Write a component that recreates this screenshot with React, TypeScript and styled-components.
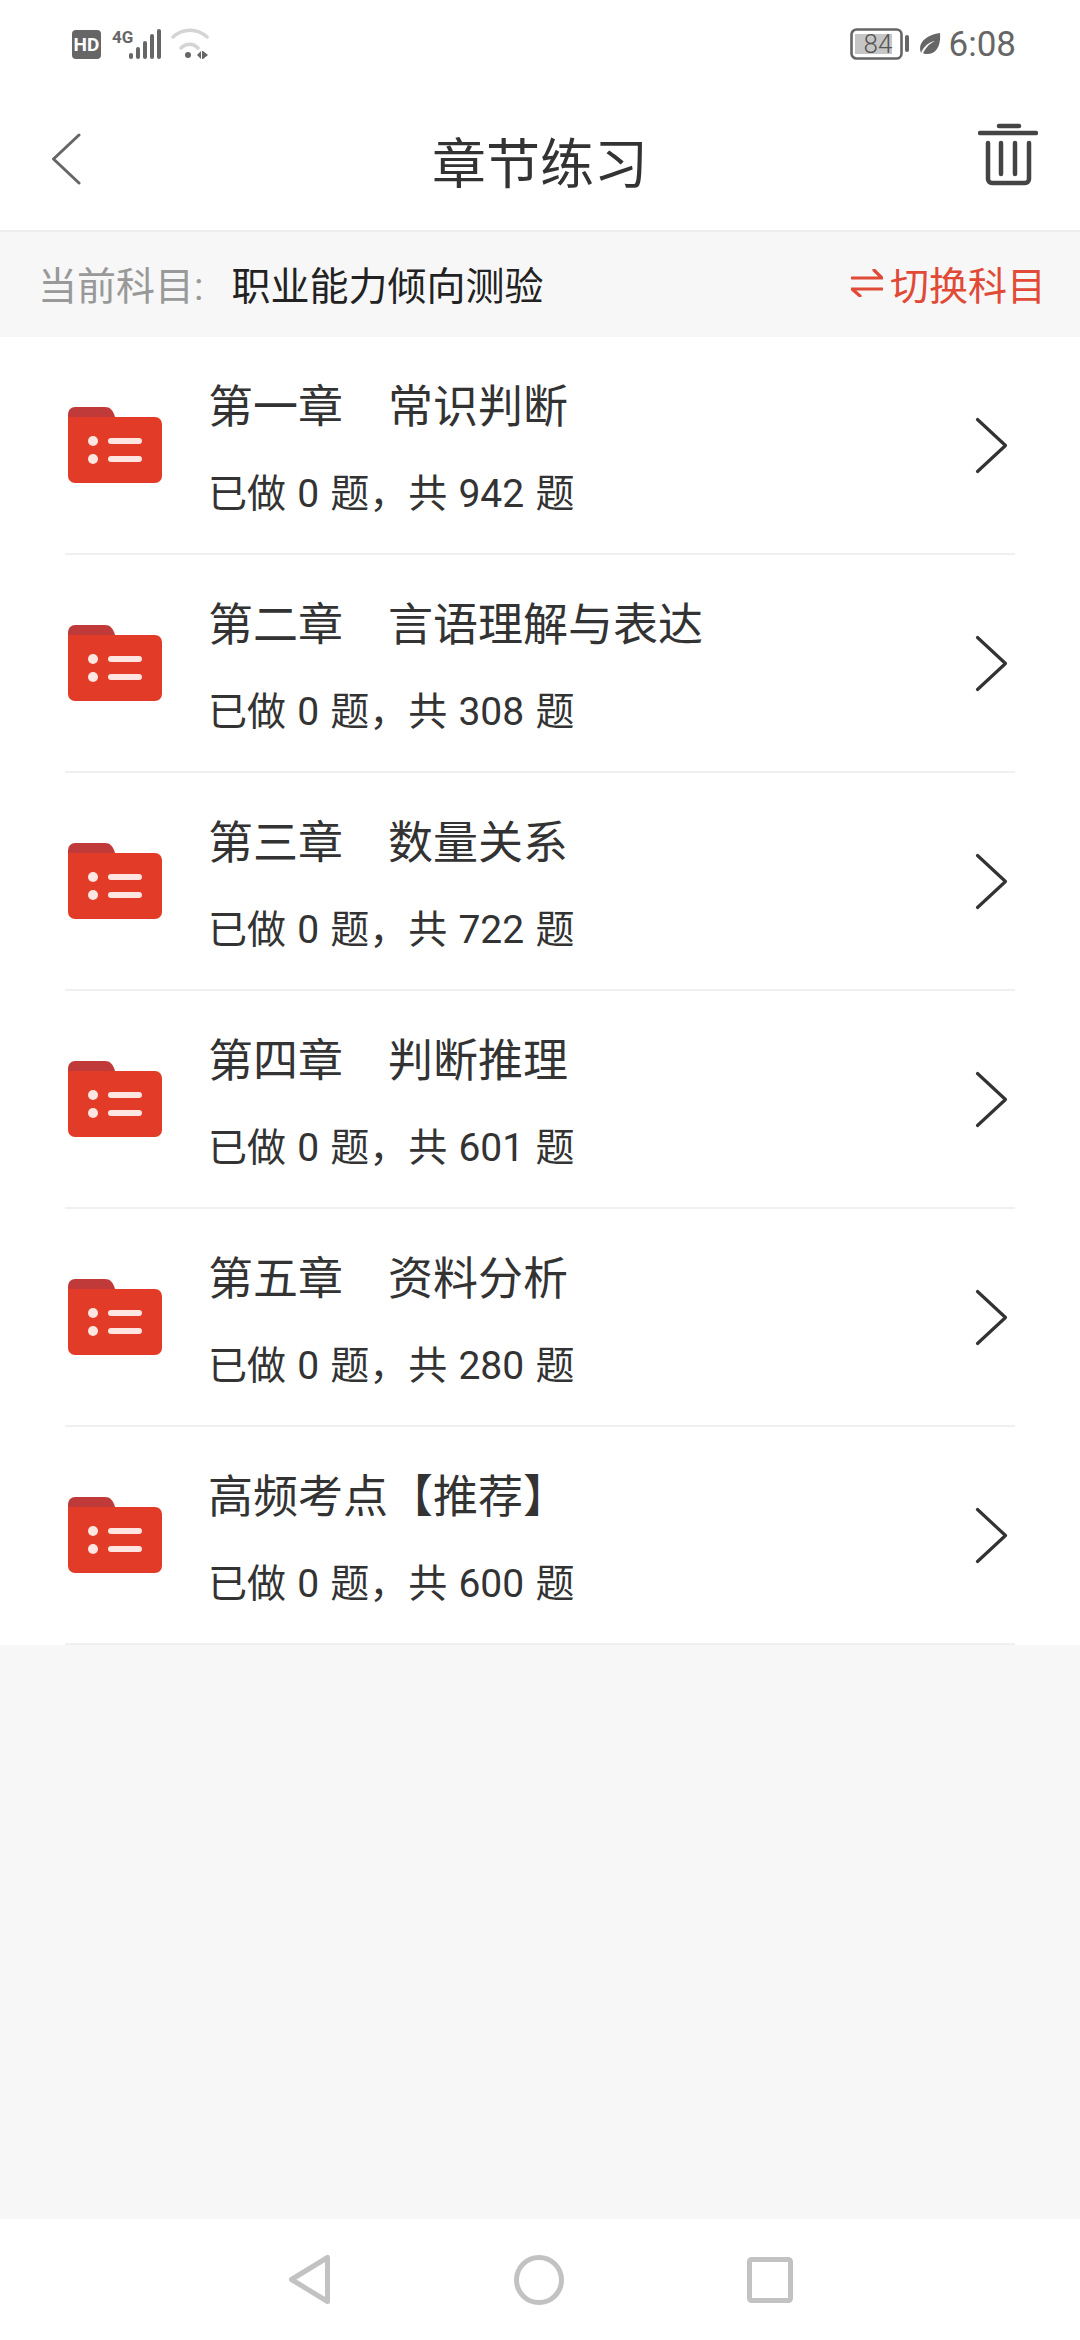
import React from 'react';
import styled, { createGlobalStyle } from 'styled-components';

const GlobalStyle = createGlobalStyle`
    html, body {
        margin: 0;
        padding: 0;
        background: #f7f7f7;
    }

    * {
        box-sizing: border-box;
    }
`;

const Page = styled.div`
    width: 1080px;
    height: 2340px;
    display: flex;
    flex-direction: column;
    background: #f7f7f7;
    font-family: Roboto, "Noto Sans CJK SC", sans-serif;
    overflow: hidden;
`;

const StatusBar = styled.div`
    height: 88px;
    flex: none;
    display: flex;
    align-items: center;
    justify-content: space-between;
    padding: 0 64px 0 72px;
    background: #fff;
    color: #666;
`;

const StatusGroup = styled.div`
    display: flex;
    align-items: center;
`;

const Clock = styled.span`
    margin-left: 8px;
    font-size: 35px;
    color: #666;
`;

const Header = styled.header`
    height: 144px;
    flex: none;
    display: grid;
    grid-template-columns: 1fr auto 1fr;
    align-items: center;
    padding: 2px 42px 0;
    background: #fff;
    border-bottom: 2px solid #eeeeee;
`;

const BackButton = styled.div`
    display: flex;
    margin-left: 9px;
    margin-bottom: 2px;
`;

const TrashButton = styled.div`
    display: flex;
    justify-content: flex-end;
    margin-bottom: 11px;
`;

const Title = styled.h1`
    margin: 0;
    font-size: 54px;
    font-weight: 400;
    color: #333;
`;

const SubjectBar = styled.div`
    height: 105px;
    flex: none;
    display: flex;
    align-items: center;
    justify-content: space-between;
    padding: 0 34px 3px 38px;
`;

const SubjectLabel = styled.span`
    font-size: 39px;
    color: #999;
`;

const SubjectName = styled.span`
    margin-left: 28px;
    font-size: 39px;
    color: #222;
`;

const SwitchButton = styled.div`
    display: flex;
    align-items: center;
    gap: 7px;
    font-size: 39px;
    color: #e04a36;
`;

const List = styled.div`
    flex: none;
    background: #fff;
`;

const Row = styled.div`
    height: 218px;
    margin: 0 65px;
    display: flex;
    align-items: center;
    border-bottom: 2px solid #f0f0f0;
`;

const RowText = styled.div`
    flex: 1;
    margin-left: 46px;
    padding-top: 7px;
    display: flex;
    flex-direction: column;
    gap: 32px;
`;

const RowTitle = styled.div`
    font-size: 45px;
    line-height: 58px;
    color: #333;
    white-space: pre;
`;

const ChapterName = styled.span`
    margin-left: 45px;
`;

const RowMeta = styled.div`
    font-size: 39px;
    line-height: 50px;
    word-spacing: 1.5px;
    color: #333;
`;

const Spacer = styled.div`
    flex: 1;
`;

const NavBar = styled.nav`
    height: 121px;
    flex: none;
    display: flex;
    align-items: center;
    justify-content: center;
    gap: 183px;
    background: #fff;
`;

const chapters = [
    { chapter: '第一章', name: '常识判断', total: 942 },
    { chapter: '第二章', name: '言语理解与表达', total: 308 },
    { chapter: '第三章', name: '数量关系', total: 722 },
    { chapter: '第四章', name: '判断推理', total: 601 },
    { chapter: '第五章', name: '资料分析', total: 280 },
    { chapter: '高频考点【推荐】', total: 600 },
];

const FolderIcon = () => (
    <svg width="94" height="76" viewBox="0 0 94 76" style={{ flex: 'none', marginLeft: 3 }}>
        <path d="M0 7a7 7 0 0 1 7-7h30c5 0 8 3 10 10v4H0z" fill="#c13a3a" />
        <path d="M0 10h87a7 7 0 0 1 7 7v52a7 7 0 0 1-7 7H7a7 7 0 0 1-7-7z" fill="#e23b28" />
        <circle cx="25" cy="34" r="5" fill="#fde6e2" />
        <circle cx="25" cy="52" r="5" fill="#fde6e2" />
        <rect x="40" y="31" width="34" height="6" rx="3" fill="#fde6e2" />
        <rect x="40" y="49" width="34" height="6" rx="3" fill="#fde6e2" />
    </svg>
);

const Chevron = () => (
    <svg width="33" height="57" viewBox="0 0 33 57" style={{ flex: 'none', marginRight: 7 }}>
        <path d="M2.5 2.5l28 26-28 26" fill="none" stroke="#333" strokeWidth="3.2" strokeLinecap="round" strokeLinejoin="round" />
    </svg>
);

export default function App() {
    return (
        <Page>
            <GlobalStyle />
            <StatusBar>
                <StatusGroup>
                    <svg width="137" height="32" viewBox="0 0 137 32">
                        <rect x="0" y="2" width="29" height="29" rx="4" fill="#666" />
                        <text x="14.5" y="23" textAnchor="middle" fontFamily="Roboto, sans-serif" fontWeight="700" fontSize="19" fill="#fff">HD</text>
                        <text x="40" y="15" fontFamily="'Liberation Sans Narrow', Roboto, sans-serif" fontWeight="700" fontSize="17" fill="#666">4G</text>
                        <rect x="57" y="25" width="4" height="6" rx="2" fill="#666" />
                        <rect x="64" y="19" width="4" height="12" rx="2" fill="#666" />
                        <rect x="71" y="13" width="4" height="18" rx="2" fill="#666" />
                        <rect x="78" y="6" width="4" height="25" rx="2" fill="#666" />
                        <rect x="85" y="1" width="4" height="30" rx="2" fill="#666" />
                        <path d="M101 9c10-9 24-9 34 0" fill="none" stroke="#d4d4d4" strokeWidth="3.5" strokeLinecap="round" />
                        <path d="M109 20c5-5 12-5 17 0" fill="none" stroke="#d4d4d4" strokeWidth="3.5" strokeLinecap="round" />
                        <circle cx="116" cy="27" r="3" fill="#666" />
                        <path d="M125 27l4-4v8zM130 23h1l5 4-5 4h-1z" fill="#666" />
                    </svg>
                </StatusGroup>
                <StatusGroup>
                    <svg width="60" height="32" viewBox="0 0 60 32">
                        <rect x="1.5" y="1.5" width="50" height="29" rx="5" fill="none" stroke="#666" strokeWidth="2.6" />
                        <rect x="5" y="6" width="37" height="20" fill="#c6c6c6" />
                        <text x="28" y="25" textAnchor="middle" fontFamily="Roboto, sans-serif" fontWeight="300" fontSize="26" fill="#555">84</text>
                        <rect x="55" y="7" width="4" height="17" rx="2" fill="#666" />
                    </svg>
                    <svg width="22" height="23" viewBox="0 0 22 23" style={{ marginLeft: 9 }}>
                        <path d="M21 0c1 12-3 21-13 21-2 0-3-.4-4-1 3-6 7-10 12-12C10 9 5 13 2 20 -2 10 7 2 21 0z" fill="#666" />
                    </svg>
                    <Clock>6:08</Clock>
                </StatusGroup>
            </StatusBar>
            <Header>
                <BackButton>
                    <svg width="30" height="52" viewBox="0 0 30 52">
                        <path d="M28 2L2.5 26 28 50" fill="none" stroke="#666" strokeWidth="3" strokeLinecap="round" strokeLinejoin="round" />
                    </svg>
                </BackButton>
                <Title>章节练习</Title>
                <TrashButton>
                    <svg width="60" height="64" viewBox="0 0 60 64">
                        <path d="M2 10h56" stroke="#444" strokeWidth="4.5" strokeLinecap="round" />
                        <path d="M21 3h20" stroke="#444" strokeWidth="4.5" strokeLinecap="round" />
                        <path d="M10 20v36a4 4 0 0 0 4 4h33a4 4 0 0 0 4-4V20" fill="none" stroke="#444" strokeWidth="4.5" strokeLinecap="round" />
                        <path d="M23 20v31M37 20v31" stroke="#444" strokeWidth="4.5" strokeLinecap="round" />
                    </svg>
                </TrashButton>
            </Header>
            <SubjectBar>
                <div>
                    <SubjectLabel>当前科目:</SubjectLabel>
                    <SubjectName>职业能力倾向测验</SubjectName>
                </div>
                <SwitchButton>
                    <svg width="32" height="28" viewBox="0 0 32 28">
                        <path d="M1 9h30l-8-8M31 20H1l8 7" fill="none" stroke="#e04a36" strokeWidth="3.2" strokeLinecap="round" strokeLinejoin="round" />
                    </svg>
                    切换科目
                </SwitchButton>
            </SubjectBar>
            <List>
                {chapters.map(item => (
                    <Row key={item.chapter}>
                        <FolderIcon />
                        <RowText>
                            <RowTitle>
                                {item.chapter}
                                {item.name && <ChapterName>{item.name}</ChapterName>}
                            </RowTitle>
                            <RowMeta>已做 0 题，共 {item.total} 题</RowMeta>
                        </RowText>
                        <Chevron />
                    </Row>
                ))}
            </List>
            <Spacer />
            <NavBar>
                <svg width="43" height="51" viewBox="0 0 43 51">
                    <path d="M39.5 3.5v44L3.5 25.5z" fill="none" stroke="#c2c2c2" strokeWidth="5" strokeLinejoin="round" />
                </svg>
                <svg width="50" height="50" viewBox="0 0 50 50">
                    <circle cx="25" cy="25" r="22.5" fill="none" stroke="#c2c2c2" strokeWidth="5" />
                </svg>
                <svg width="46" height="46" viewBox="0 0 46 46">
                    <rect x="2.5" y="2.5" width="41" height="41" rx="2" fill="none" stroke="#c2c2c2" strokeWidth="5" />
                </svg>
            </NavBar>
        </Page>
    );
}
